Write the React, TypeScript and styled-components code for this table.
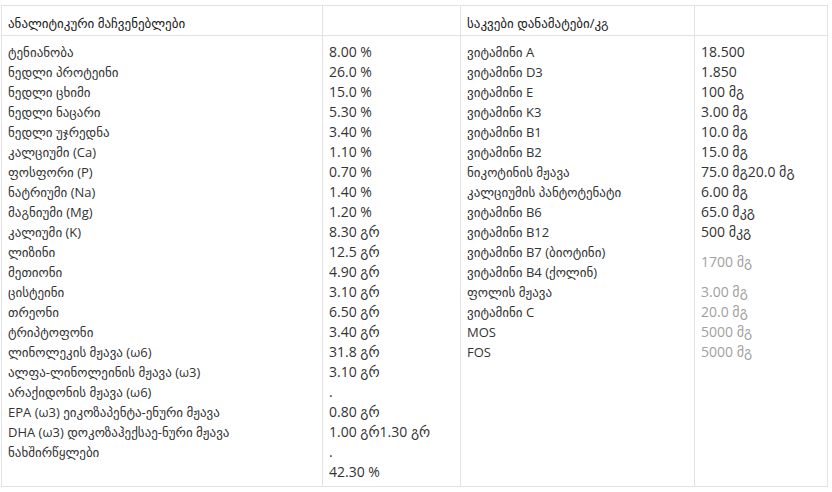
import React from "react";
import styled, { createGlobalStyle } from "styled-components";

const Global = createGlobalStyle`
  html, body { margin: 0; padding: 0; background: #ffffff; }
  body {
    font-family: "Open Sans", "DejaVu Sans", sans-serif;
    font-size: 13px;
    color: #333333;
  }
`;

const Page = styled.div`
  padding: 5px 4px 0 1px;
`;

const Table = styled.div`
  display: grid;
  grid-template-columns: 321px 138px 234px 133px;
  border-top: 1px solid #e2e2e2;
  border-left: 1px solid #e2e2e2;
  width: 827px;
  box-sizing: border-box;
`;

const HeadCell = styled.div`
  border-right: 1px solid #e2e2e2;
  border-bottom: 1px solid #e2e2e2;
  padding: 7px 6px 3px;
  line-height: 20px;
  height: 30px;
  box-sizing: border-box;
  font-size: 13px;
  color: #1a1a1a;
  white-space: nowrap;
`;

const BodyCell = styled.div<{ $values?: boolean }>`
  border-right: 1px solid #e2e2e2;
  border-bottom: 1px solid #e2e2e2;
  padding: 6px 6px 4px;
  display: flex;
  flex-direction: column;
  font-size: ${(p) => (p.$values ? 14 : 13)}px;
`;

const Line = styled.div<{ $tall?: boolean; $muted?: boolean }>`
  height: ${(p) => (p.$tall ? 40 : 20)}px;
  line-height: 20px;
  display: flex;
  align-items: center;
  white-space: nowrap;
  color: ${(p) => (p.$muted ? "#a0a0a0" : "#333333")};
`;

type Row = { label: string; value: string };

const leftRows: Row[] = [
  { label: "ტენიანობა", value: "8.00 %" },
  { label: "ნედლი პროტეინი", value: "26.0 %" },
  { label: "ნედლი ცხიმი", value: "15.0 %" },
  { label: "ნედლი ნაცარი", value: "5.30 %" },
  { label: "ნედლი უჯრედნა", value: "3.40 %" },
  { label: "კალციუმი (Ca)", value: "1.10 %" },
  { label: "ფოსფორი (P)", value: "0.70 %" },
  { label: "ნატრიუმი (Na)", value: "1.40 %" },
  { label: "მაგნიუმი (Mg)", value: "1.20 %" },
  { label: "კალიუმი (K)", value: "8.30 გრ" },
  { label: "ლიზინი", value: "12.5 გრ" },
  { label: "მეთიონი", value: "4.90 გრ" },
  { label: "ცისტეინი", value: "3.10 გრ" },
  { label: "თრეონი", value: "6.50 გრ" },
  { label: "ტრიპტოფონი", value: "3.40 გრ" },
  { label: "ლინოლეკის მჟავა (ω6)", value: "31.8 გრ" },
  { label: "ალფა-ლინოლეინის მჟავა (ω3)", value: "3.10 გრ" },
  { label: "არაქიდონის მჟავა (ω6)", value: "." },
  { label: "EPA (ω3) ეიკოზაპენტა-ენური მჟავა", value: "0.80 გრ" },
  { label: "DHA (ω3) დოკოზაჰექსაე-ნური მჟავა", value: "1.00 გრ1.30 გრ" },
  { label: "ნახშირწყლები", value: "." },
  { label: "", value: "42.30 %" },
];

type RRow = { labels: string[]; value: string; muted?: boolean };

const rightRows: RRow[] = [
  { labels: ["ვიტამინი A"], value: "18.500" },
  { labels: ["ვიტამინი D3"], value: "1.850" },
  { labels: ["ვიტამინი E"], value: "100 მგ" },
  { labels: ["ვიტამინი K3"], value: "3.00 მგ" },
  { labels: ["ვიტამინი B1"], value: "10.0 მგ" },
  { labels: ["ვიტამინი B2"], value: "15.0 მგ" },
  { labels: ["ნიკოტინის მჟავა"], value: "75.0 მგ20.0 მგ" },
  { labels: ["კალციუმის პანტოტენატი"], value: "6.00 მგ" },
  { labels: ["ვიტამინი B6"], value: "65.0 მკგ" },
  { labels: ["ვიტამინი B12"], value: "500 მკგ" },
  { labels: ["ვიტამინი B7 (ბიოტინი)", "ვიტამინი B4 (ქოლინ)"], value: "1700 მგ", muted: true },
  { labels: ["ფოლის მჟავა"], value: "3.00 მგ", muted: true },
  { labels: ["ვიტამინი C"], value: "20.0 მგ", muted: true },
  { labels: ["MOS"], value: "5000 მგ", muted: true },
  { labels: ["FOS"], value: "5000 მგ", muted: true },
];

export default function App() {
  return (
    <>
      <Global />
      <Page>
        <Table>
          <HeadCell>ანალიტიკური მაჩვენებლები</HeadCell>
          <HeadCell />
          <HeadCell>საკვები დანამატები/კგ</HeadCell>
          <HeadCell />

          <BodyCell>
            {leftRows.map((r, i) => (
              <Line key={i}>{r.label}</Line>
            ))}
          </BodyCell>
          <BodyCell $values>
            {leftRows.map((r, i) => (
              <Line key={i}>{r.value}</Line>
            ))}
          </BodyCell>
          <BodyCell>
            {rightRows.flatMap((r, i) =>
              r.labels.map((l, j) => <Line key={`${i}-${j}`}>{l}</Line>)
            )}
          </BodyCell>
          <BodyCell $values>
            {rightRows.map((r, i) => (
              <Line key={i} $tall={r.labels.length > 1} $muted={r.muted}>
                {r.value}
              </Line>
            ))}
          </BodyCell>
        </Table>
      </Page>
    </>
  );
}
